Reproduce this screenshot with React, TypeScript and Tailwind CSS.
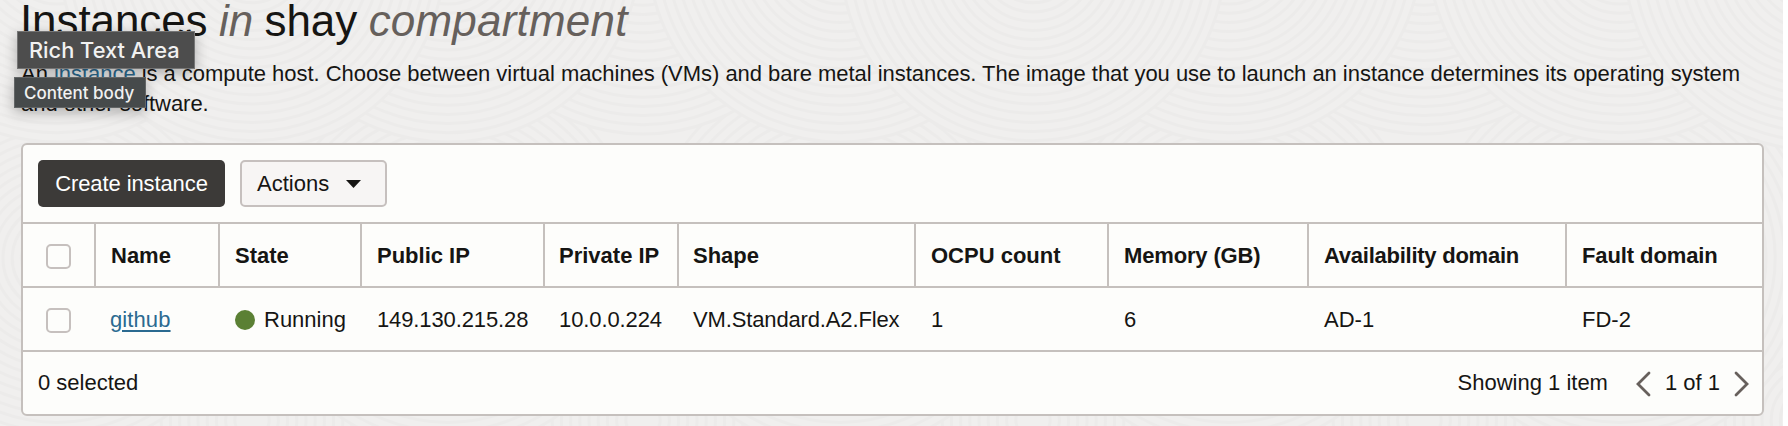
import type { ReactNode } from "react";

const COLUMNS = "grid grid-cols-[73px_124px_142px_183px_134px_237px_193px_200px_258px_195px]";

const columns: { label: string; pad: string; tracking?: string; cellTracking?: string }[] = [
  { label: "Name", pad: "pl-[15px]", cellTracking: "tracking-[0.1px] -ml-px" },
  { label: "State", pad: "pl-[15px]" },
  { label: "Public IP", pad: "pl-[15px]", cellTracking: "tracking-[-0.12px]" },
  { label: "Private IP", pad: "pl-[14px]", cellTracking: "tracking-[-0.1px]" },
  { label: "Shape", pad: "pl-[14px]", cellTracking: "tracking-[-0.14px]" },
  { label: "OCPU count", pad: "pl-[15px]" },
  { label: "Memory (GB)", pad: "pl-[15px]", tracking: "tracking-[-0.15px]" },
  { label: "Availability domain", pad: "pl-[15px]", tracking: "tracking-[-0.25px]" },
  { label: "Fault domain", pad: "pl-[15px]", tracking: "tracking-[-0.1px]" },
];

const instance: ReactNode[] = [
  <a key="name" href="#" className="text-[#2b6a90] underline decoration-[1.5px] underline-offset-[3px]">
    github
  </a>,
  <span key="state" className="flex items-center gap-[9px]">
    <span className="size-5 rounded-full bg-[#5b8034]" />
    Running
  </span>,
  "149.130.215.28",
  "10.0.0.224",
  "VM.Standard.A2.Flex",
  "1",
  "6",
  "AD-1",
  "FD-2",
];

const RING_STEP = 9.2;
const DISC_RADIUS = 192;
const rings = Array.from({ length: 20 }, (_, i) => DISC_RADIUS - i * RING_STEP);

const discs: [number, number][] = [
  ...[-139, 252, 643, 1033, 1424, 1816].map((x): [number, number] => [x, 420]),
  ...[57, 448, 840, 1229, 1620].map((x): [number, number] => [x, 258]),
  ...[-139, 643, 1424].map((x): [number, number] => [x, -58]),
  ...[57, 448, 840, 1229, 1620].map((x): [number, number] => [x, -50]),
  ...[252, 1033, 1816].map((x): [number, number] => [x, -42]),
];

function Texture() {
  return (
    <svg className="absolute inset-0 -z-10" width="1783" height="426" aria-hidden="true">
      {discs.map(([cx, cy], i) => (
        <g key={i} fill="#f0efee" stroke="#ecebea" strokeWidth="3">
          {rings.map((r) => (
            <circle key={r} cx={cx} cy={cy} r={r} />
          ))}
        </g>
      ))}
    </svg>
  );
}

function Checkbox() {
  return (
    <span className="mt-[3px] ml-[23px] block size-[25px] rounded-[5px] border-2 border-[#c6c0be] bg-[#fdfdfb]" />
  );
}

function Chevron({ d }: { d: string }) {
  return (
    <svg
      className="mt-[3px]"
      width="15"
      height="26"
      viewBox="0 0 15 26"
      fill="none"
      stroke="#67605c"
      strokeWidth="2.8"
      strokeLinecap="round"
    >
      <path d={d} />
    </svg>
  );
}

export default function App() {
  return (
    <div className="h-[426px] w-full overflow-hidden bg-white font-['Liberation_Sans',Arial,sans-serif] text-[22px] leading-[30px] text-[#161513]">
      <div className="relative isolate h-full w-[1783px] overflow-hidden bg-[#f0efee] pl-[21px]">
        <Texture />
        <h1 className="-ml-px h-[59px] text-[44px] leading-[42px] tracking-[-0.1px] whitespace-nowrap [word-spacing:-0.6px]">
          Instances <i className="text-[#66605c]">in</i> shay{" "}
          <i className="tracking-[0.2px] text-[#66605c]">compartment</i>
        </h1>
        <p className="h-[84px] tracking-[-0.035px] whitespace-nowrap">
          An <a href="#" className="text-[#2b6a90] underline">instance</a> is a compute host. Choose between virtual
          machines (VMs) and bare metal instances. The image that you use to launch an instance determines its operating
          system
          <br />
          and other software.
        </p>

        <section className="h-[273px] w-[1743px] rounded-[6px] border-2 border-[#c5c0bd] bg-[#fdfdfb]">
          <div className="flex h-[77px] gap-[15px] pt-[15px] pl-[15px]">
            <button className="h-[47px] w-[187px] rounded-[5px] bg-[#3c3a38] pt-px tracking-[-0.1px] text-white">
              Create instance
            </button>
            <button className="flex h-[47px] w-[147px] items-center gap-[17px] rounded-[5px] border-2 border-[#c6c0be] bg-[#f7f5f4] pt-px pl-[15px]">
              Actions
              <svg width="15" height="8" viewBox="0 0 15 8" fill="#161513">
                <path d="M0 0h15L7.5 8z" />
              </svg>
            </button>
          </div>

          <div className={`${COLUMNS} h-[66px] border-y-2 border-[#c5c0bd] font-bold`}>
            <div className="flex items-center border-r-2 border-[#c5c0bd]">
              <Checkbox />
            </div>
            {columns.map(({ label, pad, tracking }, i) => (
              <div
                key={label}
                className={`flex items-center pt-[2px] whitespace-nowrap ${pad} ${tracking ?? ""} ${
                  i < columns.length - 1 ? "border-r-2 border-[#c5c0bd]" : ""
                }`}
              >
                {label}
              </div>
            ))}
          </div>

          <div className={`${COLUMNS} h-[64px] border-b-2 border-[#c5c0bd]`}>
            <div className="flex items-center">
              <Checkbox />
            </div>
            {instance.map((value, i) => (
              <div
                key={i}
                className={`flex items-center pt-px whitespace-nowrap ${columns[i].pad} ${columns[i].cellTracking ?? ""}`}
              >
                {value}
              </div>
            ))}
          </div>

          <div className="flex h-[61px] items-center pr-[13px] pl-[15px]">
            <span>0 selected</span>
            <span className="ml-auto">Showing 1 item</span>
            <span className="ml-[28px] flex items-center gap-[14px]">
              <Chevron d="M13 2 2 13l11 11" />
              <span>1 of 1</span>
              <Chevron d="M2 2l11 11L2 24" />
            </span>
          </div>
        </section>

        <div className="absolute top-[31px] left-[17px] flex h-[38px] w-[178px] items-center border border-[#767676] bg-[#4d4d4d] pl-[11px] font-[Inter,sans-serif] text-[21.8px] font-medium whitespace-nowrap text-[#f1f1f1] shadow-[0_4px_14px_rgba(0,0,0,0.28)]">
          Rich Text Area
        </div>
        <div className="absolute top-[77px] left-[14px] flex h-[31px] w-[132px] items-center border border-[#626566] bg-[#464a4b] pl-[9px] font-[Inter,sans-serif] text-[17px] font-medium whitespace-nowrap text-[#f1f1f1] shadow-[0_4px_14px_rgba(0,0,0,0.28)]">
          Content body
        </div>
      </div>
    </div>
  );
}
